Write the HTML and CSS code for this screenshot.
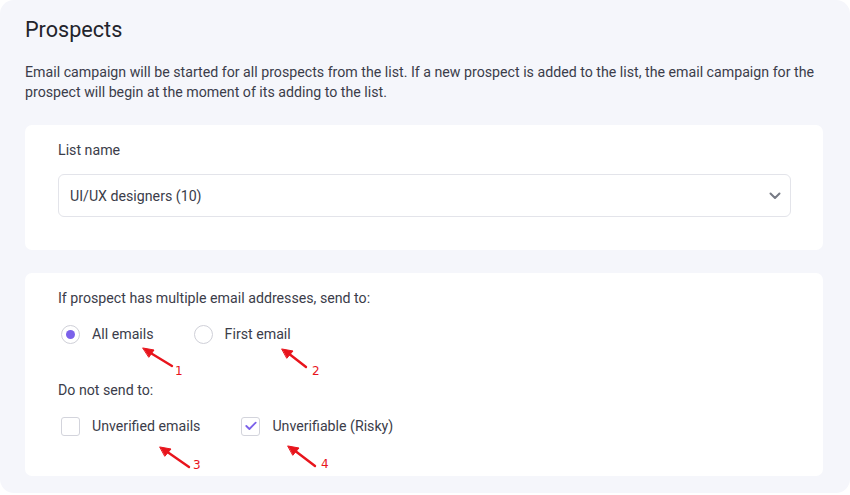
FILE: index.html
```html
<!DOCTYPE html>
<html lang="en">
<head>
    <meta charset="UTF-8">
    <title>Prospects</title>
    <link rel="stylesheet" href="styles.css">
</head>
<body>
    <div class="panel">
        <h1 class="title">Prospects</h1>
        <p class="desc">Email campaign will be started for all prospects from the list. If a new prospect is added to the list, the email campaign for the prospect will begin at the moment of its adding to the list.</p>

        <div class="card card-list">
            <div class="field-label">List name</div>
            <div class="select">
                <span>UI/UX designers (10)</span>
                <svg class="chevron" width="12" height="8" viewBox="0 0 12 8">
                    <path d="M1.5 1.5 L6 6 L10.5 1.5" fill="none" stroke="#777b85" stroke-width="2" stroke-linecap="round" stroke-linejoin="round"/>
                </svg>
            </div>
        </div>

        <div class="card card-options">
            <div class="field-label">If prospect has multiple email addresses, send to:</div>
            <div class="option-row">
                <label class="option opt-all">
                    <span class="radio checked"></span>
                    All emails
                </label>
                <label class="option">
                    <span class="radio"></span>
                    First email
                </label>
            </div>

            <div class="field-label section-gap">Do not send to:</div>
            <div class="option-row">
                <label class="option opt-unverified">
                    <span class="checkbox"></span>
                    Unverified emails
                </label>
                <label class="option">
                    <span class="checkbox">
                        <svg width="12" height="10" viewBox="0 0 12 10">
                            <path d="M1.3 5 L4.4 8 L10.7 1.6" fill="none" stroke="#7b61ea" stroke-width="1.8" stroke-linecap="round" stroke-linejoin="round"/>
                        </svg>
                    </span>
                    Unverifiable (Risky)
                </label>
            </div>
        </div>

        <!-- hand-drawn annotations -->
        <svg class="notes" width="850" height="495" viewBox="0 0 850 495">
            <g stroke="#e8141c" stroke-width="2.4" fill="#e8141c" stroke-linecap="round">
                <line x1="172" y1="366" x2="149" y2="352"/>
                <polygon points="143,348 154,350 149,357" stroke-width="1"/>
                <line x1="306" y1="367" x2="288" y2="353"/>
                <polygon points="282,349 293,351 287,358" stroke-width="1"/>
                <line x1="189" y1="467" x2="166" y2="451"/>
                <polygon points="160,447 171,449 165,456" stroke-width="1"/>
                <line x1="315" y1="466" x2="294" y2="450"/>
                <polygon points="288,446 299,448 293,455" stroke-width="1"/>
            </g>
            <g class="note-num" fill="#e8141c">
                <text x="175" y="375">1</text>
                <text x="312" y="375">2</text>
                <text x="193" y="469">3</text>
                <text x="321" y="468">4</text>
            </g>
        </svg>
    </div>
</body>
</html>
```

FILE: styles.css
```css
body {
    margin: 0;
    padding: 0;
    background-color: #fff;
    font-family: Roboto, "Liberation Sans", sans-serif;
    color: #3b3d4a;
}

.panel {
    position: relative;
    height: 493px;
    box-sizing: border-box;
    padding: 16px 27px 0 25px;
    background-color: #f5f6fb;
    border-radius: 14px;
}

.title {
    margin: 0;
    font-size: 21.6px;
    line-height: 28px;
    font-weight: 400;
    color: #23242c;
}

.desc {
    margin: 18px 0 0;
    font-size: 14.2px;
    line-height: 20px;
}

.card {
    background-color: #fff;
    border-radius: 7px;
    padding: 15px 32px 0 33px;
}

.card-list {
    margin-top: 23px;
    height: 110px;
}

.card-options {
    margin-top: 23px;
    height: 188px;
}

.field-label {
    font-size: 14.2px;
    line-height: 20px;
}

.section-gap {
    margin-top: 36px;
}

.select {
    margin-top: 14px;
    height: 43px;
    box-sizing: border-box;
    border: 1px solid #e3e4ea;
    border-radius: 6px;
    display: flex;
    align-items: center;
    justify-content: space-between;
    padding: 0 9px 0 11px;
    font-size: 14.2px;
}

.option-row {
    display: flex;
    margin-top: 16px;
    height: 20px;
    align-items: center;
}

.option {
    display: flex;
    align-items: center;
    font-size: 14.2px;
    line-height: 20px;
}

.opt-all {
    margin-right: 37px;
}

.opt-unverified {
    margin-right: 38px;
}

.radio {
    width: 19px;
    height: 19px;
    box-sizing: border-box;
    border: 1px solid #cfd0d8;
    border-radius: 50%;
    margin: 0 12px 0 3px;
    display: flex;
    align-items: center;
    justify-content: center;
}

.radio.checked::after {
    content: "";
    width: 9px;
    height: 9px;
    border-radius: 50%;
    background-color: #7b61ea;
}

.checkbox {
    width: 19px;
    height: 19px;
    box-sizing: border-box;
    border: 1px solid #d3d4dc;
    border-radius: 3px;
    margin: 0 12px 0 3px;
    display: flex;
    align-items: center;
    justify-content: center;
}

.notes {
    position: absolute;
    top: 0;
    left: 0;
    pointer-events: none;
}

.note-num {
    font-family: "DejaVu Sans", sans-serif;
    font-size: 12px;
}
```
